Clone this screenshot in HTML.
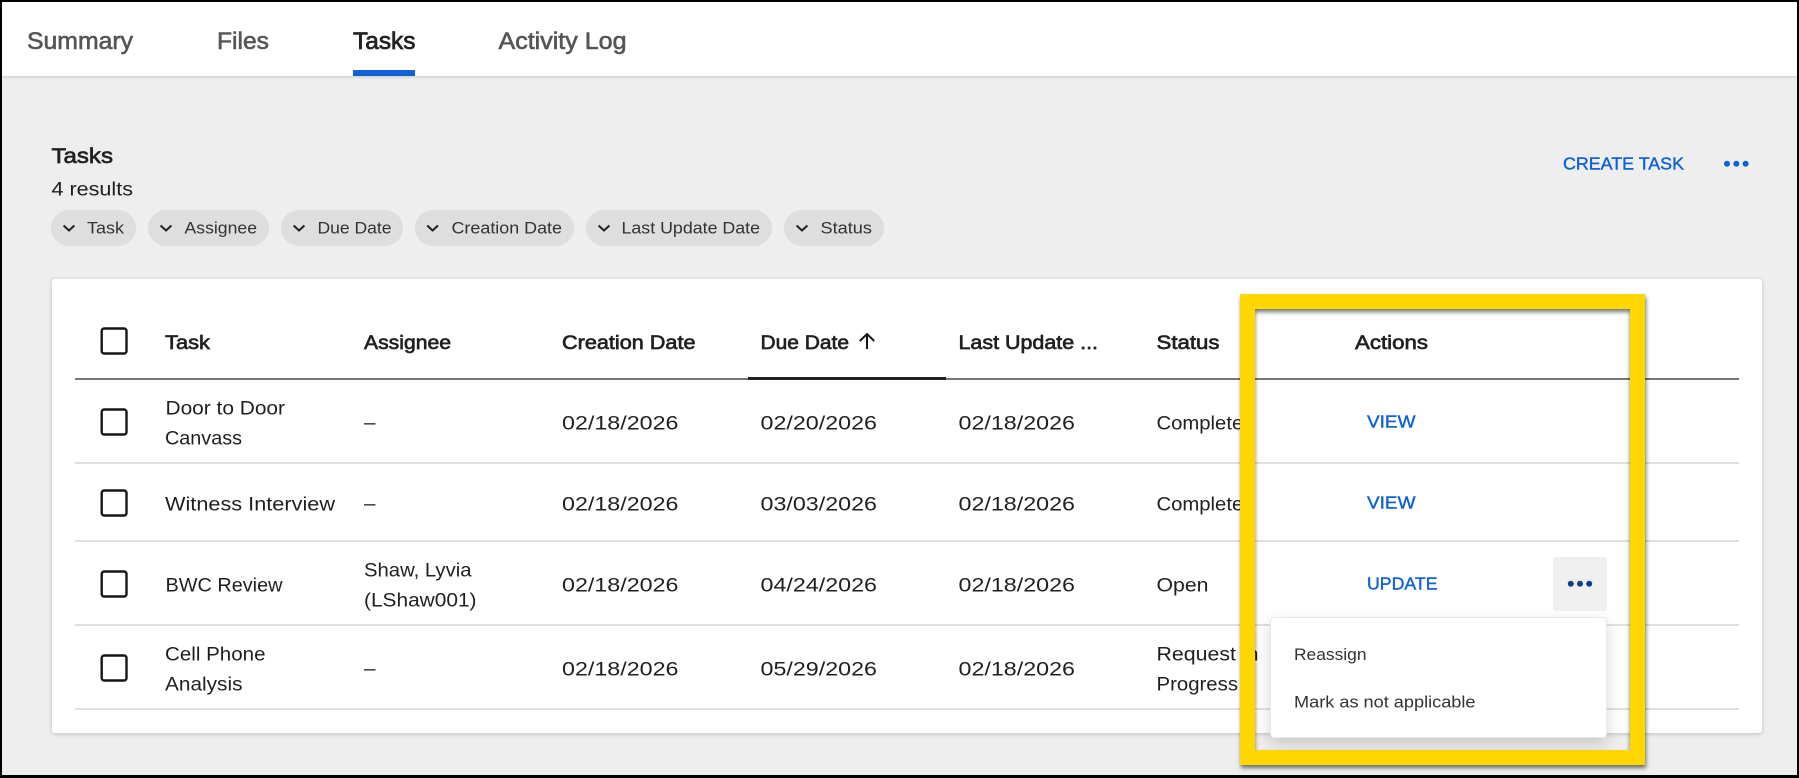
<!DOCTYPE html>
<html lang="en">
<head>
<meta charset="utf-8">
<title>Tasks</title>
<style>
html,body{margin:0;padding:0;width:1799px;height:778px;overflow:hidden;background:#000}
#page{position:absolute;left:2px;top:2px;width:1795px;height:773px;background:#eee;overflow:hidden}
.abs{position:absolute}
#tabbar{left:0;top:0;width:1795px;height:74px;background:#fff;box-shadow:0 1px 3px rgba(0,0,0,.16)}
#ink{left:351px;top:68px;width:62px;height:6px;background:#0f62d6}
.chip{position:absolute;top:208px;height:36px;border-radius:18px;background:#dedede}
#card{left:50px;top:277px;width:1710px;height:454px;background:#fff;border-radius:3px;box-shadow:0 1px 5px rgba(0,0,0,.2)}
.ln{position:absolute;left:73px;width:1664px;height:2px;background:#e0e0e0}
#hline{top:376px;background:#777;height:2px}
#sort{left:746px;top:375px;width:198px;height:3px;background:#222}
#more{left:1551px;top:555px;width:54px;height:54px;background:#f0f0f0;border-radius:3px}
#menu{left:1267.5px;top:615px;width:337px;height:121px;background:#fff;border:1px solid #e8e8e8;border-radius:4px;box-sizing:border-box;box-shadow:0 6px 16px rgba(0,0,0,.16)}
#frame{left:1238px;top:292px;width:405px;height:471px;box-sizing:border-box;border:15px solid #ffd700;box-shadow:1px 3px 4px rgba(0,0,0,.55),inset 0 3px 4px rgba(0,0,0,.55)}
svg{position:absolute;left:-2px;top:-2px;width:1799px;height:778px;overflow:visible}
text{font-family:"Liberation Sans",sans-serif;font-size:19.5px;fill:#1f1f1f;white-space:pre}
.tab{font-size:24px;fill:#555;stroke:#555;stroke-width:.6}
.tabon{font-size:24px;fill:#222;stroke:#222;stroke-width:.7}
.title{font-size:21.5px;stroke:#222;stroke-width:.65}
.chipt{font-size:17px;fill:#333}
.th{font-size:19.5px;stroke:#222;stroke-width:.65}
.act{font-size:17.4px;fill:#0f62d6;stroke:#0f62d6;stroke-width:.4}
.mi{font-size:17px;fill:#333}
</style>
</head>
<body>
<div id="page">
  <div class="abs" id="tabbar"></div>
  <div class="abs" id="ink"></div>

  <div class="chip" style="left:49px;width:85px"></div>
  <div class="chip" style="left:146px;width:121px"></div>
  <div class="chip" style="left:279px;width:122px"></div>
  <div class="chip" style="left:413px;width:158.5px"></div>
  <div class="chip" style="left:584px;width:185.5px"></div>
  <div class="chip" style="left:782px;width:100px"></div>

  <div class="abs" id="card"></div>
  <div class="ln" id="hline"></div>
  <div class="abs" id="sort"></div>
  <div class="ln" style="top:460px"></div>
  <div class="ln" style="top:538px"></div>
  <div class="ln" style="top:622px"></div>
  <div class="ln" style="top:706px"></div>
  <div class="abs" id="more"></div>

  <svg viewBox="0 0 1799 778">
    <text class="tab" x="27" y="49" textLength="106" lengthAdjust="spacingAndGlyphs">Summary</text>
    <text class="tab" x="217" y="49" textLength="52" lengthAdjust="spacingAndGlyphs">Files</text>
    <text class="tabon" x="353" y="49" textLength="62.5" lengthAdjust="spacingAndGlyphs">Tasks</text>
    <text class="tab" x="498.5" y="49" textLength="128" lengthAdjust="spacingAndGlyphs">Activity Log</text>

    <text class="title" x="51.5" y="163" textLength="61.5" lengthAdjust="spacingAndGlyphs">Tasks</text>
    <text x="51.5" y="195.5" textLength="81.5" lengthAdjust="spacingAndGlyphs">4 results</text>

    <g fill="none" stroke="#222" stroke-width="2">
      <path d="M63.6 225.5L69 230.5L74.4 225.5"/>
      <path d="M160.6 225.5L166 230.5L171.4 225.5"/>
      <path d="M293.6 225.5L299 230.5L304.4 225.5"/>
      <path d="M427.2 225.5L432.6 230.5L438 225.5"/>
      <path d="M598.6 225.5L604 230.5L609.4 225.5"/>
      <path d="M796.6 225.5L802 230.5L807.4 225.5"/>
    </g>
    <text class="chipt" x="87" y="233.5" textLength="37" lengthAdjust="spacingAndGlyphs">Task</text>
    <text class="chipt" x="184.5" y="233.5" textLength="72.5" lengthAdjust="spacingAndGlyphs">Assignee</text>
    <text class="chipt" x="317.5" y="233.5" textLength="74" lengthAdjust="spacingAndGlyphs">Due Date</text>
    <text class="chipt" x="451.5" y="233.5" textLength="110.5" lengthAdjust="spacingAndGlyphs">Creation Date</text>
    <text class="chipt" x="621.5" y="233.5" textLength="138.5" lengthAdjust="spacingAndGlyphs">Last Update Date</text>
    <text class="chipt" x="820.5" y="233.5" textLength="51.5" lengthAdjust="spacingAndGlyphs">Status</text>

    <text class="act" x="1563" y="169.5" textLength="121" lengthAdjust="spacingAndGlyphs">CREATE TASK</text>
    <g fill="#0f62d6"><circle cx="1727" cy="163.7" r="3"/><circle cx="1736.3" cy="163.7" r="3"/><circle cx="1745.6" cy="163.7" r="3"/></g>

    <g fill="none" stroke="#161616" stroke-width="2.4">
      <rect x="101.7" y="328.5" width="24.8" height="25" rx="2.5"/>
      <rect x="101.7" y="409.5" width="24.8" height="25" rx="2.5"/>
      <rect x="101.7" y="490.5" width="24.8" height="25" rx="2.5"/>
      <rect x="101.7" y="571.5" width="24.8" height="25" rx="2.5"/>
      <rect x="101.7" y="655.5" width="24.8" height="25" rx="2.5"/>
    </g>

    <text class="th" x="165" y="349" textLength="45" lengthAdjust="spacingAndGlyphs">Task</text>
    <text class="th" x="364" y="349" textLength="87" lengthAdjust="spacingAndGlyphs">Assignee</text>
    <text class="th" x="562" y="349" textLength="133.5" lengthAdjust="spacingAndGlyphs">Creation Date</text>
    <text class="th" x="760.5" y="349" textLength="88.5" lengthAdjust="spacingAndGlyphs">Due Date</text>
    <path d="M867 349V335M859.8 341L867 334L874.2 341" fill="none" stroke="#161616" stroke-width="2"/>
    <text class="th" x="958.5" y="349" textLength="139.5" lengthAdjust="spacingAndGlyphs">Last Update ...</text>
    <text class="th" x="1156.5" y="349" textLength="63" lengthAdjust="spacingAndGlyphs">Status</text>
    <text class="th" x="1355" y="349" textLength="73" lengthAdjust="spacingAndGlyphs">Actions</text>

    <text x="165.5" y="414.5" textLength="119.5" lengthAdjust="spacingAndGlyphs">Door to Door</text>
    <text x="165" y="444.5" textLength="77" lengthAdjust="spacingAndGlyphs">Canvass</text>
    <text x="364" y="429" textLength="11.5" lengthAdjust="spacingAndGlyphs">–</text>
    <text x="562" y="429.5" textLength="116.5" lengthAdjust="spacingAndGlyphs">02/18/2026</text>
    <text x="760.5" y="429.5" textLength="116.5" lengthAdjust="spacingAndGlyphs">02/20/2026</text>
    <text x="958.5" y="429.5" textLength="116.5" lengthAdjust="spacingAndGlyphs">02/18/2026</text>
    <text x="1156.5" y="429.5" textLength="98" lengthAdjust="spacingAndGlyphs">Completed</text>
    <text class="act" x="1367" y="427.7" textLength="48.5" lengthAdjust="spacingAndGlyphs">VIEW</text>

    <text x="165" y="510.5" textLength="170" lengthAdjust="spacingAndGlyphs">Witness Interview</text>
    <text x="364" y="510" textLength="11.5" lengthAdjust="spacingAndGlyphs">–</text>
    <text x="562" y="510.5" textLength="116.5" lengthAdjust="spacingAndGlyphs">02/18/2026</text>
    <text x="760.5" y="510.5" textLength="116.5" lengthAdjust="spacingAndGlyphs">03/03/2026</text>
    <text x="958.5" y="510.5" textLength="116.5" lengthAdjust="spacingAndGlyphs">02/18/2026</text>
    <text x="1156.5" y="510.5" textLength="98" lengthAdjust="spacingAndGlyphs">Completed</text>
    <text class="act" x="1367" y="508.7" textLength="48.5" lengthAdjust="spacingAndGlyphs">VIEW</text>

    <text x="165.5" y="591.5" textLength="117" lengthAdjust="spacingAndGlyphs">BWC Review</text>
    <text x="364" y="576.5" textLength="107.5" lengthAdjust="spacingAndGlyphs">Shaw, Lyvia</text>
    <text x="364" y="606.5" textLength="112.5" lengthAdjust="spacingAndGlyphs">(LShaw001)</text>
    <text x="562" y="591.5" textLength="116.5" lengthAdjust="spacingAndGlyphs">02/18/2026</text>
    <text x="760.5" y="591.5" textLength="116.5" lengthAdjust="spacingAndGlyphs">04/24/2026</text>
    <text x="958.5" y="591.5" textLength="116.5" lengthAdjust="spacingAndGlyphs">02/18/2026</text>
    <text x="1156.5" y="591.5" textLength="52" lengthAdjust="spacingAndGlyphs">Open</text>
    <text class="act" x="1367" y="589.7" textLength="70.5" lengthAdjust="spacingAndGlyphs">UPDATE</text>
    <g fill="#0f3f8f"><circle cx="1570.8" cy="583.7" r="3"/><circle cx="1580" cy="583.7" r="3"/><circle cx="1589.2" cy="583.7" r="3"/></g>

    <text x="165" y="660.5" textLength="100.5" lengthAdjust="spacingAndGlyphs">Cell Phone</text>
    <text x="165" y="690.5" textLength="77.5" lengthAdjust="spacingAndGlyphs">Analysis</text>
    <text x="364" y="675" textLength="11.5" lengthAdjust="spacingAndGlyphs">–</text>
    <text x="562" y="675.5" textLength="116.5" lengthAdjust="spacingAndGlyphs">02/18/2026</text>
    <text x="760.5" y="675.5" textLength="116.5" lengthAdjust="spacingAndGlyphs">05/29/2026</text>
    <text x="958.5" y="675.5" textLength="116.5" lengthAdjust="spacingAndGlyphs">02/18/2026</text>
    <text x="1156.5" y="660.5" textLength="102" lengthAdjust="spacingAndGlyphs">Request in</text>
    <text x="1156.5" y="690.5" textLength="81.5" lengthAdjust="spacingAndGlyphs">Progress</text>
  </svg>

  <div class="abs" id="menu"></div>
  <svg viewBox="0 0 1799 778">
    <text class="mi" x="1294" y="660" textLength="72.5" lengthAdjust="spacingAndGlyphs">Reassign</text>
    <text class="mi" x="1294" y="707.5" textLength="181.5" lengthAdjust="spacingAndGlyphs">Mark as not applicable</text>
  </svg>

  <div class="abs" id="frame"></div>
</div>
</body>
</html>
